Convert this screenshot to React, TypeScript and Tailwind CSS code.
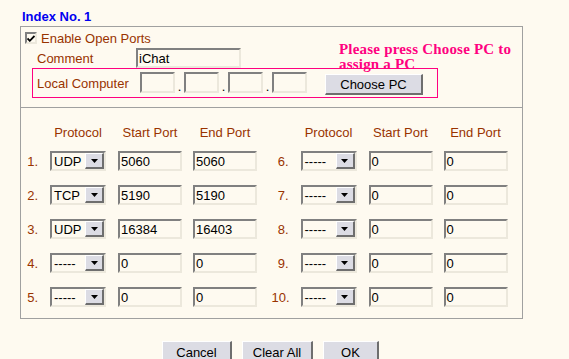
import React from 'react'

const brown = 'text-[#993300]'
const inset = 'border-2 border-t-[#808080] border-l-[#808080] border-r-[#ece8dc] border-b-[#ece8dc]'
const raised = 'bg-[#dcdce4] border-t border-l border-t-white border-l-white border-r-2 border-b-2 border-r-[#6e6e6e] border-b-[#6e6e6e]'

type Row = { n: number; proto: string; start: string; end: string }

const left: Row[] = [
  { n: 1, proto: 'UDP', start: '5060', end: '5060' },
  { n: 2, proto: 'TCP', start: '5190', end: '5190' },
  { n: 3, proto: 'UDP', start: '16384', end: '16403' },
  { n: 4, proto: '-----', start: '0', end: '0' },
  { n: 5, proto: '-----', start: '0', end: '0' },
]
const right: Row[] = [6, 7, 8, 9, 10].map(n => ({ n, proto: '-----', start: '0', end: '0' }))

function Field({ value, w = 'w-[64px]', h = 'h-[20px]' }: { value?: string; w?: string; h?: string }) {
  return (
    <div className={`${w} ${h} ${inset} flex items-center pl-[1px] text-[13px] text-black leading-none`}>
      {value}
    </div>
  )
}

function Select({ value }: { value: string }) {
  return (
    <div className={`w-[56px] h-[20px] ${inset} flex items-center justify-between`}>
      <span className="pl-[2px] text-[13px] leading-none text-black">{value}</span>
      <div className={`w-[19px] h-[16px] flex items-center justify-center ${raised} border-r border-b`}>
        <svg width="7" height="4" viewBox="0 0 7 4">
          <path d="M0 0h7L3.5 4z" fill="#000" />
        </svg>
      </div>
    </div>
  )
}

function Half({ row }: { row: Row }) {
  return (
    <div className="flex items-center w-[253px]">
      <div className={`w-[29px] pr-[12px] text-right text-[13px] leading-none ${brown}`}>{row.n}.</div>
      <Select value={row.proto} />
      <div className="ml-[12px]"><Field value={row.start} /></div>
      <div className="ml-[11px]"><Field value={row.end} /></div>
    </div>
  )
}

function HeaderHalf() {
  return (
    <div className={`flex w-[253px] text-[13px] leading-[15px] ${brown}`}>
      <div className="w-[29px]" />
      <div className="w-[56px] text-center">Protocol</div>
      <div className="ml-[12px] w-[64px] text-center">Start Port</div>
      <div className="ml-[11px] w-[64px] text-center">End Port</div>
    </div>
  )
}

export default function App() {
  return (
    <div className="relative w-[569px] h-[359px] overflow-hidden bg-[#fefaf0] font-['Liberation_Sans',Arial,sans-serif]">
      <div className="pl-[22px] pt-[9px] h-[26px] text-[13px] leading-[15px] font-bold text-[#0000f0]">Index No. 1</div>

      {/* main panel */}
      <div className="ml-[20px] w-[503px] border border-[#a0a0a0]">
        <div className="h-[76px]">
          <div className="mt-[4px] h-[14px] flex items-center">
            <div className={`ml-[4px] w-[12px] h-[12px] ${inset} flex items-center justify-center`}>
              <svg width="8" height="7" viewBox="0 0 8 7">
                <path d="M0.5 3.5l2.3 2.3L7.5 1" stroke="#000" strokeWidth="1.8" fill="none" />
              </svg>
            </div>
            <span className={`ml-[4px] text-[13px] leading-none ${brown}`}>Enable Open Ports</span>
          </div>

          <div className="mt-[3px] h-[20px] flex items-center">
            <div className={`pl-[16px] w-[115px] text-[13px] leading-none ${brown}`}>Comment</div>
            <Field value="iChat" w="w-[105px]" />
          </div>

          <div className="ml-[11px] w-[406px] h-[30px] border border-[#ff0080] flex items-start">
            <div className={`pl-[4px] w-[107px] mt-[8px] text-[13px] leading-none ${brown}`}>Local Computer</div>
            <div className="mt-[3px] flex items-end">
              <Field w="w-[35px]" h="h-[21px]" />
              <span className="w-[9px] text-center text-[13px] leading-[12px] text-black">.</span>
              <Field w="w-[35px]" h="h-[21px]" />
              <span className="w-[9px] text-center text-[13px] leading-[12px] text-black">.</span>
              <Field w="w-[35px]" h="h-[21px]" />
              <span className="w-[9px] text-center text-[13px] leading-[12px] text-black">.</span>
              <Field w="w-[35px]" h="h-[21px]" />
            </div>
            <button className={`ml-[18px] mt-[5px] w-[98px] h-[21px] ${raised} text-[13px] leading-none text-black`}>
              Choose PC
            </button>
          </div>
        </div>

        <div className="border-t border-[#a0a0a0] pt-[17px] pb-[11px]">
          <div className="flex">
            <HeaderHalf />
            <HeaderHalf />
          </div>
          <div className="mt-[11px] flex flex-col gap-[14px]">
            {left.map((row, i) => (
              <div key={row.n} className="flex h-[20px]">
                <Half row={row} />
                <Half row={right[i]} />
              </div>
            ))}
          </div>
        </div>
      </div>

      <div className="mt-[22px] ml-[162px] flex gap-[10px]">
        <button className={`w-[70px] h-[24px] ${raised} text-[13px] leading-none text-black`}>Cancel</button>
        <button className={`w-[71px] h-[24px] ${raised} text-[13px] leading-none text-black`}>Clear All</button>
        <button className={`w-[56px] h-[24px] ${raised} text-[13px] leading-none text-black`}>OK</button>
      </div>

      {/* hint that sits over the pink frame */}
      <div className="absolute left-[339px] top-[42px] text-[15px] leading-[15px] tracking-[0.2px] font-bold text-[#ff0080] font-['Liberation_Serif','Times_New_Roman',serif]">
        Please press Choose PC to
        <br />
        assign a PC
      </div>
    </div>
  )
}
